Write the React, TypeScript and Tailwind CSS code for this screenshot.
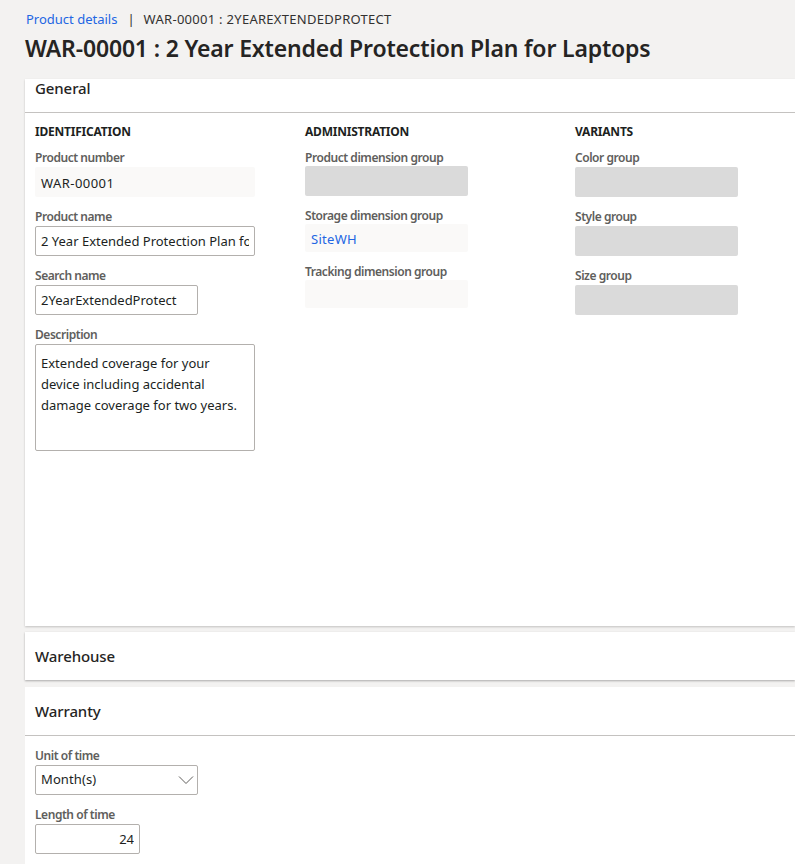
import React from "react";

const font = "font-['Noto_Sans',sans-serif]";

const Label = ({
  children,
  className = "h-[29px]",
}: {
  children: React.ReactNode;
  className?: string;
}) => (
  <div
    className={`pt-[11px] text-[12px] leading-[17px] font-semibold tracking-[-0.45px] text-[#605e5c] ${className}`}
  >
    {children}
  </div>
);

const Heading = ({ children }: { children: React.ReactNode }) => (
  <div className="text-[15px] leading-[20px] font-medium tracking-[-0.1px] text-[#252423]">
    {children}
  </div>
);

const GroupTitle = ({ children }: { children: React.ReactNode }) => (
  <div className="h-[16px] text-[12px] leading-[20px] font-bold tracking-[-0.22px] text-[#201f1e]">
    {children}
  </div>
);

const TextField = ({
  value,
  className,
}: {
  value: string;
  className?: string;
}) => (
  <input
    readOnly
    value={value}
    className={`block h-[30px] rounded-[2px] border border-[#b3b0ad] bg-white px-[5px] text-[13px] text-[#201f1e] outline-none ${className}`}
  />
);

const ReadOnly = ({
  children,
  className,
}: {
  children?: React.ReactNode;
  className?: string;
}) => (
  <div className={`rounded-[2px] bg-[#faf9f8] px-[6px] text-[13px] ${className}`}>
    {children}
  </div>
);

const Disabled = () => (
  <div className="h-[30px] w-[163px] rounded-[2px] bg-[#dadada]" />
);

export default function App() {
  return (
    <div className={`h-[864px] overflow-hidden bg-[#f3f2f1] ${font}`}>
      <div className="flex h-[38px] items-center pt-[2px] pl-[26px] text-[13px] text-[#323130]">
        <span className="text-[#2266e3]">Product details</span>
        <span className="mr-[9px] ml-[10px] text-[#323130]">|</span>
        <span className="tracking-[0.28px]">WAR-00001 : 2YEAREXTENDEDPROTECT</span>
      </div>
      <h1 className="-mt-[2px] h-[43px] pl-[25px] text-[23px] leading-[24px] font-semibold tracking-[-0.17px] text-[#252423]">
        WAR-00001 : 2 Year Extended Protection Plan for Laptops
      </h1>

      <div className="ml-[25px] flex flex-col">
        <section className="h-[547px] bg-white shadow-[0_1px_2px_rgba(0,0,0,0.2)]">
          <div className="h-[34px] border-b border-[#c4c2c0] pl-[10px]">
            <div className="-translate-y-px">
              <Heading>General</Heading>
            </div>
          </div>
          <div className="flex pt-[9px] pl-[10px]">
            <div className="w-[270px]">
              <GroupTitle>IDENTIFICATION</GroupTitle>
              <Label>Product number</Label>
              <ReadOnly className="h-[30px] w-[220px] leading-[32px] tracking-[0.45px] text-[#201f1e]">
                WAR-00001
              </ReadOnly>
              <Label>Product name</Label>
              <TextField
                className="w-[220px]"
                value="2 Year Extended Protection Plan for Laptops"
              />
              <Label>Search name</Label>
              <TextField className="w-[163px]" value="2YearExtendedProtect" />
              <Label>Description</Label>
              <div className="h-[107px] w-[220px] rounded-[2px] border border-[#b3b0ad] px-[5px] pt-[8px] text-[13px] leading-[21px] text-[#201f1e]">
                Extended coverage for your
                <br />
                device including accidental
                <br />
                damage coverage for two years.
              </div>
            </div>

            <div className="w-[270px]">
              <GroupTitle>ADMINISTRATION</GroupTitle>
              <Label className="h-[28px]">Product dimension group</Label>
              <Disabled />
              <Label className="h-[28px]">Storage dimension group</Label>
              <ReadOnly className="h-[28px] w-[163px] leading-[30px] tracking-[0.3px] text-[#2266e3]">
                SiteWH
              </ReadOnly>
              <Label className="h-[28px]">Tracking dimension group</Label>
              <ReadOnly className="h-[28px] w-[163px]" />
            </div>

            <div>
              <GroupTitle>VARIANTS</GroupTitle>
              <Label>Color group</Label>
              <Disabled />
              <Label>Style group</Label>
              <Disabled />
              <Label>Size group</Label>
              <Disabled />
            </div>
          </div>
        </section>

        <section className="mt-[6px] h-[48px] bg-white pt-[14px] pl-[10px] shadow-[0_1px_2px_rgba(0,0,0,0.3)]">
          <Heading>Warehouse</Heading>
        </section>

        <section className="mt-[7px] h-[177px] bg-white">
          <div className="h-[49px] border-b border-[#c4c2c0] pt-[14px] pl-[10px]">
            <Heading>Warranty</Heading>
          </div>
          <div className="pl-[10px]">
            <Label>Unit of time</Label>
            <div className="flex h-[30px] w-[163px] items-center justify-between rounded-[2px] border border-[#b3b0ad] pr-[3px] pl-[5px] text-[13px] tracking-[0.1px] text-[#201f1e]">
              <span>Month(s)</span>
              <svg width="16" height="10" viewBox="0 0 16 10" fill="none">
                <path d="M1 1.5 8 8.5 15 1.5" stroke="#605e5c" strokeWidth="1" />
              </svg>
            </div>
            <Label>Length of time</Label>
            <TextField className="w-[105px] text-right" value="24" />
          </div>
        </section>
      </div>
    </div>
  );
}
